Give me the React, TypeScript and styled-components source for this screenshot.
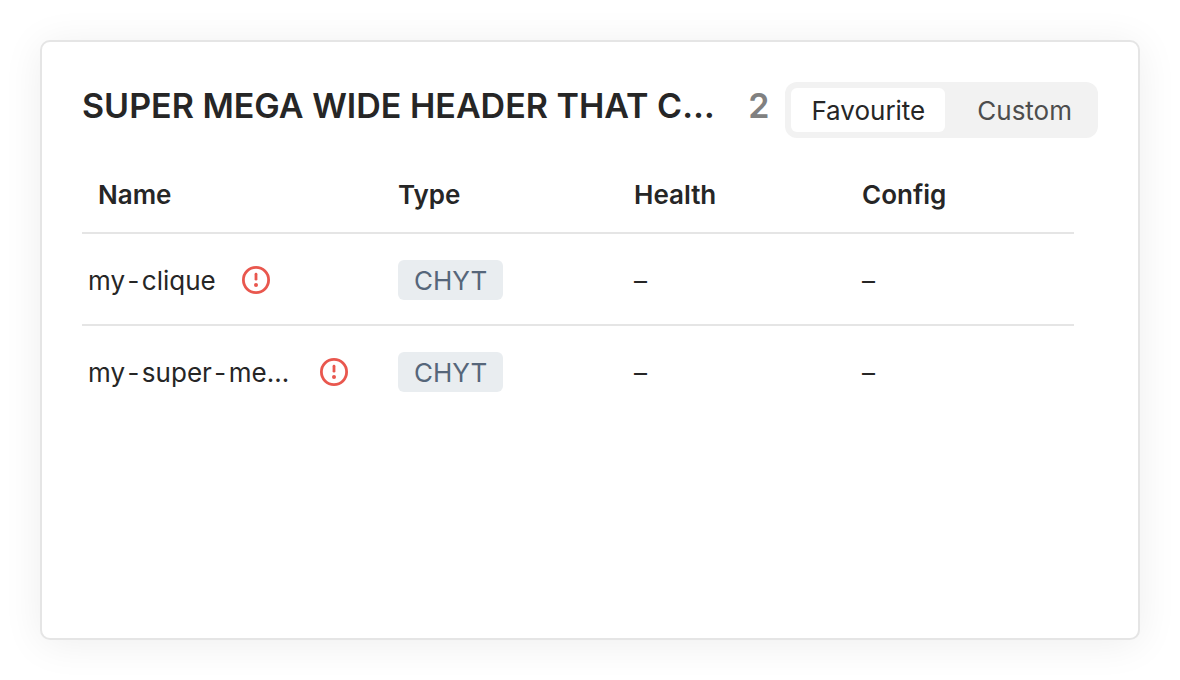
import React, { useState } from "react";
import styled, { createGlobalStyle } from "styled-components";

const GlobalStyle = createGlobalStyle`
  *, *::before, *::after { box-sizing: border-box; }
  body {
    margin: 0;
    background: #fff;
    color: #262626;
    font-family: Inter, "Liberation Sans", sans-serif;
    font-size: 26px;
    line-height: 36px;
    -webkit-font-smoothing: antialiased;
  }
`;

const Page = styled.main`
  min-height: 100vh;
  padding: 40px;
  display: flex;
`;

const Card = styled.section`
  flex: 1;
  min-width: 0;
  padding: 40px;
  border: 2px solid #e5e5e5;
  border-radius: 10px;
  background: #fff;
  box-shadow: 0 4px 40px rgba(0, 0, 0, 0.07);
`;

const Header = styled.header`
  display: flex;
  align-items: flex-start;
  height: 56px;
`;

const Title = styled.h2`
  flex: 0 1 auto;
  min-width: 0;
  margin: 0;
  font-size: 34px;
  line-height: 48px;
  font-weight: 600;
  white-space: nowrap;
  overflow: hidden;
  text-overflow: ellipsis;
`;

const Count = styled.span`
  margin: 0 16px 0 32px;
  font-size: 34px;
  line-height: 48px;
  font-weight: 600;
  color: #808080;
`;

const Segments = styled.div`
  display: flex;
  flex: none;
  gap: 12px;
  margin-left: auto;
  padding: 6px;
  border-radius: 12px;
  background: #f2f2f2;
`;

const Segment = styled.button<{ $active: boolean }>`
  height: 44px;
  padding: 2px 20px 0;
  border: 0;
  border-radius: 6px;
  background: ${(p) => (p.$active ? "#fff" : "transparent")};
  color: ${(p) => (p.$active ? "#262626" : "#4d4d4d")};
  font: inherit;
  cursor: pointer;
`;

const Table = styled.table`
  width: calc(100% - 24px);
  margin-top: 20px;
  border-collapse: separate;
  border-spacing: 0;
  table-layout: fixed;
`;

const HeadCell = styled.th<{ $width?: string; $inset?: boolean }>`
  width: ${(p) => p.$width ?? "auto"};
  height: 74px;
  padding: 0 0 0 ${(p) => (p.$inset ? "16px" : "0")};
  text-align: left;
  font-weight: 600;
`;

const Cell = styled.td`
  height: 92px;
  padding: 2px 0 0;
  border-top: 2px solid #e5e5e5;
`;

const ValueCell = styled(Cell)`
  padding-top: 4px;
`;

const NameBox = styled.div`
  display: flex;
  align-items: center;
  gap: 26px;
  padding: 0 50px 0 6px;
`;

const Name = styled.span`
  min-width: 0;
  padding-top: 2px;
  font-variant-numeric: tabular-nums;
  white-space: nowrap;
  overflow: hidden;
  text-overflow: ellipsis;
`;

const Tag = styled.span`
  display: inline-block;
  height: 40px;
  padding: 1px 16px 0;
  border-radius: 6px;
  background: #e9edf0;
  color: #56667a;
  line-height: 40px;
  vertical-align: middle;
`;

const Alert = styled.svg`
  flex: none;
  width: 28px;
  height: 28px;
`;

const AlertIcon = () => (
  <Alert viewBox="0 0 28 28" fill="none" stroke="#e9574e" strokeLinecap="round" role="img" aria-label="Alert">
    <circle cx="14" cy="14" r="12.6" strokeWidth="2.8" />
    <path d="M14 8.2v5" strokeWidth="2.8" />
    <circle cx="14" cy="19" r="2" fill="#e9574e" stroke="none" />
  </Alert>
);

const tabs = ["Favourite", "Custom"];
const services = [
  { name: "my-clique", type: "CHYT", health: "–", config: "–" },
  { name: "my-super-mega-clique", type: "CHYT", health: "–", config: "–" },
];

export default function App() {
  const [active, setActive] = useState("Favourite");
  return (
    <>
      <GlobalStyle />
      <Page>
        <Card>
          <Header>
            <Title>SUPER MEGA WIDE HEADER THAT CUT</Title>
            <Count>2</Count>
            <Segments role="group" aria-label="Services">
              {tabs.map((tab) => (
                <Segment key={tab} type="button" $active={tab === active} aria-pressed={tab === active} onClick={() => setActive(tab)}>
                  {tab}
                </Segment>
              ))}
            </Segments>
          </Header>
          <Table>
            <thead>
              <tr>
                <HeadCell $width="316px" $inset>Name</HeadCell>
                <HeadCell $width="236px">Type</HeadCell>
                <HeadCell $width="228px">Health</HeadCell>
                <HeadCell>Config</HeadCell>
              </tr>
            </thead>
            <tbody>
              {services.map((s) => (
                <tr key={s.name}>
                  <Cell>
                    <NameBox>
                      <Name>{s.name}</Name>
                      <AlertIcon />
                    </NameBox>
                  </Cell>
                  <Cell><Tag>{s.type}</Tag></Cell>
                  <ValueCell>{s.health}</ValueCell>
                  <ValueCell>{s.config}</ValueCell>
                </tr>
              ))}
            </tbody>
          </Table>
        </Card>
      </Page>
    </>
  );
}
